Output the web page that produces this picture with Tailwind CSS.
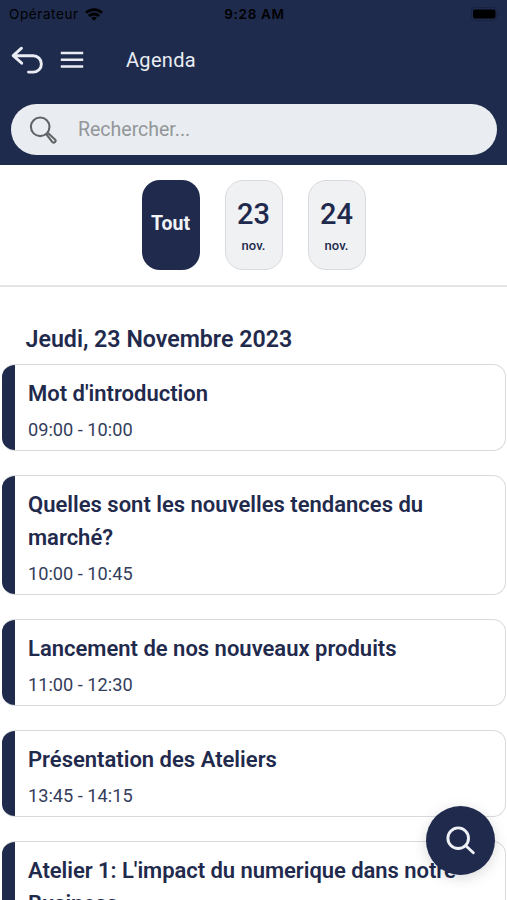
<!DOCTYPE html>
<html lang="fr">
<head>
    <meta charset="UTF-8">
    <meta name="viewport" content="width=device-width, initial-scale=1.0">
    <title>Agenda</title>
    <script src="https://cdn.jsdelivr.net/npm/@tailwindcss/browser@4"></script>
</head>
<body class="bg-white font-['Roboto',sans-serif] text-[#1f2a4d]">
    <div class="relative flex h-screen flex-col overflow-hidden">
        <!-- Header -->
        <header class="h-[165px] shrink-0 bg-[#1f2b4d]">
            <!-- Status bar -->
            <div class="grid h-7 grid-cols-3 items-center pr-[7px] pl-[9px] font-['Inter',sans-serif] text-[13.5px] text-black">
                <div class="flex items-center gap-1.5">
                    <span class="tracking-[0.6px]">Opérateur</span>
                    <svg class="h-[13px] w-[18px]" viewBox="0 0 18 13" fill="none" stroke="currentColor" stroke-width="2.8">
                        <path d="M1 4.8a11.5 11.5 0 0 1 16 0"/>
                        <path d="M4 8a7.2 7.2 0 0 1 10 0"/>
                        <path d="M9 12.8 6.2 10a4 4 0 0 1 5.6 0z" fill="currentColor" stroke="none"/>
                    </svg>
                </div>
                <span class="text-center font-semibold tracking-[0.7px]">9:28 AM</span>
                <svg class="h-[14px] w-[29px] justify-self-end" viewBox="0 0 29 14">
                    <rect x=".5" y=".5" width="25" height="13" rx="3.5" fill="none" stroke="#1a2240"/>
                    <rect x="2" y="2.5" width="22.5" height="9" rx="2" fill="#000"/>
                    <path d="M27 5v4q1.5-.5 1.5-2T27 5z" fill="#1a2240"/>
                </svg>
            </div>

            <!-- Navigation -->
            <div class="flex h-[64px] items-center pl-[11px] text-[#e9edf3]">
                <svg class="h-8 w-8" viewBox="0 0 32 32" fill="none" stroke="currentColor" stroke-width="2.9" stroke-linecap="round" stroke-linejoin="round">
                    <path d="M10.500 4.200 2.200 11.700l8.500 7.500M2.200 11.700h20a8.200 8.200 0 0 1 0 16.400h-4.700"/>
                </svg>
                <svg class="ml-[17px] h-[18px] w-[24px]" viewBox="0 0 24 18" fill="none" stroke="currentColor" stroke-width="2.5">
                    <path d="M.8 2h22.400M.8 8.700h22.400M.8 15.400h22.400"/>
                </svg>
                <h1 class="ml-[42px] text-[20px] tracking-[0.3px]">Agenda</h1>
            </div>

            <!-- Search -->
            <div class="mr-[10px] ml-[10.5px] mt-[12px] flex h-[51px] items-center rounded-full bg-[#e9edf1] pl-[18.5px]">
                <svg class="h-7 w-7" viewBox="0 0 28 28" fill="none" stroke="#626568" stroke-width="2.1" stroke-linejoin="round">
                    <circle cx="11.200" cy="10.800" r="9.300"/>
                    <path d="m17.500 18.500 1.500-1.500 7 6.500a1.800 1.800 0 0 1-2.600 2.600z"/>
                </svg>
                <span class="ml-[21px] text-[19.5px] text-[#939699]">Rechercher...</span>
            </div>
        </header>

        <!-- Date filter -->
        <div class="flex h-[122px] shrink-0 justify-center gap-[25px] border-b-2 border-[#e4e5e7] pt-[15px]">
            <div class="flex h-[90px] w-[58px] items-center justify-center rounded-[18px] bg-[#1f2a4d] pb-[3px] text-[19.5px] font-bold text-[#f1f3f6]">Tout</div>
            <div class="flex h-[90px] w-[58px] flex-col items-center rounded-[18px] border border-[#d8dadd] bg-[#eff1f3] pt-[16px]">
                <span class="text-[29px] leading-[34px] font-medium">23</span>
                <span class="mt-[6px] text-[13px] leading-[18px] font-medium">nov.</span>
            </div>
            <div class="flex h-[90px] w-[58px] flex-col items-center rounded-[18px] border border-[#d8dadd] bg-[#eff1f3] pt-[16px]">
                <span class="text-[29px] leading-[34px] font-medium">24</span>
                <span class="mt-[6px] text-[13px] leading-[18px] font-medium">nov.</span>
            </div>
        </div>

        <!-- Sessions -->
        <main class="pt-[36px]">
            <h2 class="pl-[25.5px] text-[23.2px] leading-[32px] font-semibold">Jeudi, 23 Novembre 2023</h2>
            <div class="mt-[9px] flex flex-col gap-[24px] pr-px pl-[2px]">
                <div class="flex overflow-hidden rounded-[13px] border border-l-0 border-[#d8dadd]">
                    <div class="w-[13px] shrink-0 bg-[#1f2a4d]"></div>
                    <div class="pt-[12px] pr-8 pb-[5px] pl-[13px]">
                        <h3 class="text-[22px] leading-[33px] font-semibold">Mot d'introduction</h3>
                        <p class="mt-[5px] text-[18.2px] leading-[30px] text-[#343d5c]">09:00 - 10:00</p>
                    </div>
                </div>
                <div class="flex overflow-hidden rounded-[13px] border border-l-0 border-[#d8dadd]">
                    <div class="w-[13px] shrink-0 bg-[#1f2a4d]"></div>
                    <div class="pt-[12px] pr-8 pb-[5px] pl-[13px]">
                        <h3 class="text-[22px] leading-[33px] font-semibold">Quelles sont les nouvelles tendances du marché?</h3>
                        <p class="mt-[5px] text-[18.2px] leading-[30px] text-[#343d5c]">10:00 - 10:45</p>
                    </div>
                </div>
                <div class="flex overflow-hidden rounded-[13px] border border-l-0 border-[#d8dadd]">
                    <div class="w-[13px] shrink-0 bg-[#1f2a4d]"></div>
                    <div class="pt-[12px] pr-8 pb-[5px] pl-[13px]">
                        <h3 class="text-[22px] leading-[33px] font-semibold">Lancement de nos nouveaux produits</h3>
                        <p class="mt-[5px] text-[18.2px] leading-[30px] text-[#343d5c]">11:00 - 12:30</p>
                    </div>
                </div>
                <div class="flex overflow-hidden rounded-[13px] border border-l-0 border-[#d8dadd]">
                    <div class="w-[13px] shrink-0 bg-[#1f2a4d]"></div>
                    <div class="pt-[12px] pr-8 pb-[5px] pl-[13px]">
                        <h3 class="text-[22px] leading-[33px] font-semibold">Présentation des Ateliers</h3>
                        <p class="mt-[5px] text-[18.2px] leading-[30px] text-[#343d5c]">13:45 - 14:15</p>
                    </div>
                </div>
                <div class="flex overflow-hidden rounded-[13px] border border-l-0 border-[#d8dadd]">
                    <div class="w-[13px] shrink-0 bg-[#1f2a4d]"></div>
                    <div class="pt-[12px] pr-8 pb-[5px] pl-[13px]">
                        <h3 class="text-[22px] leading-[33px] font-semibold tracking-[-0.04px]">Atelier 1: L'impact du numerique dans notre Business</h3>
                    </div>
                </div>
            </div>
        </main>

        <!-- Floating search button -->
        <button class="absolute right-[12px] bottom-[25px] flex h-[69px] w-[69px] items-center justify-center rounded-full bg-[#1f2a4d] shadow-[0_3px_14px_rgba(0,0,0,0.15)]">
            <svg class="h-[30px] w-[30px]" viewBox="0 0 30 30" fill="none" stroke="#eef1f6" stroke-width="2.9" stroke-linecap="round">
                <circle cx="12.200" cy="12.200" r="10.300"/>
                <path d="m19.800 19.800 7.500 7"/>
            </svg>
        </button>
    </div>
</body>
</html>
